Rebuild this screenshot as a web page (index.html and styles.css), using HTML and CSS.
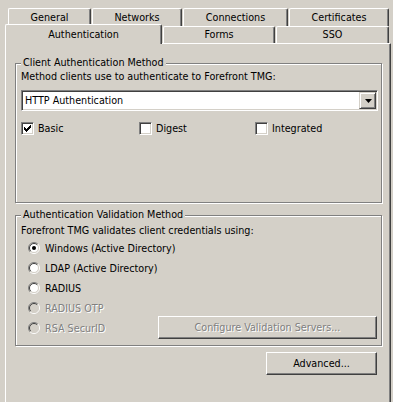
FILE: index.html
```html
<!DOCTYPE html>
<html lang="en">
<head>
    <meta charset="UTF-8">
    <meta name="viewport" content="width=device-width, initial-scale=1.0">
    <title>Authentication</title>
    <link rel="stylesheet" href="styles.css">
</head>
<body>
    <div class="dialog">
        <div class="tab-row back">
            <div class="tab general">General</div>
            <div class="tab networks">Networks</div>
            <div class="tab connections">Connections</div>
            <div class="tab certificates">Certificates</div>
        </div>
        <div class="tab-row front">
            <div class="tab selected auth">Authentication</div>
            <div class="tab forms">Forms</div>
            <div class="tab sso">SSO</div>
        </div>

        <div class="panel">
            <div class="group client">
                <div class="legend">Client Authentication Method</div>
                <div class="desc">Method clients use to authenticate to Forefront TMG:</div>
                <div class="combo">
                    <div class="combo-value">HTTP Authentication</div>
                    <div class="combo-button">
                        <svg width="7" height="4" viewBox="0 0 7 4"><path d="M0 0h7L3.5 4z" fill="#000"/></svg>
                    </div>
                </div>
                <div class="checks">
                    <label class="check basic">
                        <span class="box">
                            <svg width="7" height="7" viewBox="0 0 7 7" shape-rendering="crispEdges"><path d="M6 0h1v1h-1z M5 1h2v1h-2z M0 2h1v1h-1z M4 2h3v1h-3z M0 3h2v1h-2z M3 3h3v1h-3z M0 4h5v1h-5z M1 5h3v1h-3z M2 6h1v1h-1z" fill="#000"/></svg>
                        </span>
                        Basic
                    </label>
                    <label class="check digest"><span class="box"></span>Digest</label>
                    <label class="check"><span class="box"></span>Integrated</label>
                </div>
            </div>

            <div class="group validation">
                <div class="legend">Authentication Validation Method</div>
                <div class="desc">Forefront TMG validates client credentials using:</div>
                <div class="radios">
                    <div class="radio-row">
                        <svg class="radio" width="12" height="12" viewBox="0 0 12 12">
                            <circle cx="6" cy="6" r="4.5" fill="#fff"/>
                            <path d="M2.1 9.9A5.5 5.5 0 0 1 9.9 2.1" fill="none" stroke="#808080"/>
                            <path d="M9.9 2.1A5.5 5.5 0 0 1 2.1 9.9" fill="none" stroke="#fff"/>
                            <path d="M2.8 9.2A4.5 4.5 0 0 1 9.2 2.8" fill="none" stroke="#404040"/>
                            <path d="M9.2 2.8A4.5 4.5 0 0 1 2.8 9.2" fill="none" stroke="#d4d0c8"/>
                            <circle cx="6" cy="6" r="2" fill="#000"/>
                        </svg>
                        <span>Windows (Active Directory)</span>
                    </div>
                    <div class="radio-row">
                        <svg class="radio" width="12" height="12" viewBox="0 0 12 12">
                            <circle cx="6" cy="6" r="4.5" fill="#fff"/>
                            <path d="M2.1 9.9A5.5 5.5 0 0 1 9.9 2.1" fill="none" stroke="#808080"/>
                            <path d="M9.9 2.1A5.5 5.5 0 0 1 2.1 9.9" fill="none" stroke="#fff"/>
                            <path d="M2.8 9.2A4.5 4.5 0 0 1 9.2 2.8" fill="none" stroke="#404040"/>
                            <path d="M9.2 2.8A4.5 4.5 0 0 1 2.8 9.2" fill="none" stroke="#d4d0c8"/>
                        </svg>
                        <span>LDAP (Active Directory)</span>
                    </div>
                    <div class="radio-row">
                        <svg class="radio" width="12" height="12" viewBox="0 0 12 12">
                            <circle cx="6" cy="6" r="4.5" fill="#fff"/>
                            <path d="M2.1 9.9A5.5 5.5 0 0 1 9.9 2.1" fill="none" stroke="#808080"/>
                            <path d="M9.9 2.1A5.5 5.5 0 0 1 2.1 9.9" fill="none" stroke="#fff"/>
                            <path d="M2.8 9.2A4.5 4.5 0 0 1 9.2 2.8" fill="none" stroke="#404040"/>
                            <path d="M9.2 2.8A4.5 4.5 0 0 1 2.8 9.2" fill="none" stroke="#d4d0c8"/>
                        </svg>
                        <span>RADIUS</span>
                    </div>
                    <div class="radio-row disabled">
                        <svg class="radio" width="12" height="12" viewBox="0 0 12 12">
                            <circle cx="6" cy="6" r="4.5" fill="#d4d0c8"/>
                            <path d="M2.1 9.9A5.5 5.5 0 0 1 9.9 2.1" fill="none" stroke="#808080"/>
                            <path d="M9.9 2.1A5.5 5.5 0 0 1 2.1 9.9" fill="none" stroke="#fff"/>
                            <path d="M2.8 9.2A4.5 4.5 0 0 1 9.2 2.8" fill="none" stroke="#404040"/>
                            <path d="M9.2 2.8A4.5 4.5 0 0 1 2.8 9.2" fill="none" stroke="#d4d0c8"/>
                        </svg>
                        <span>RADIUS OTP</span>
                    </div>
                    <div class="radio-row last">
                        <div class="radio-item disabled">
                            <svg class="radio" width="12" height="12" viewBox="0 0 12 12">
                                <circle cx="6" cy="6" r="4.5" fill="#d4d0c8"/>
                                <path d="M2.1 9.9A5.5 5.5 0 0 1 9.9 2.1" fill="none" stroke="#808080"/>
                                <path d="M9.9 2.1A5.5 5.5 0 0 1 2.1 9.9" fill="none" stroke="#fff"/>
                                <path d="M2.8 9.2A4.5 4.5 0 0 1 9.2 2.8" fill="none" stroke="#404040"/>
                                <path d="M9.2 2.8A4.5 4.5 0 0 1 2.8 9.2" fill="none" stroke="#d4d0c8"/>
                            </svg>
                            <span>RSA SecurID</span>
                        </div>
                        <button class="btn configure" disabled>Configure Validation Servers...</button>
                    </div>
                </div>
            </div>

            <div class="actions">
                <button class="btn advanced">Advanced...</button>
            </div>
        </div>
    </div>
</body>
</html>
```

FILE: styles.css
```css
* {
    box-sizing: border-box;
}

body {
    margin: 0;
    height: 402px;
    overflow: hidden;
    background: #d4d0c8;
    color: #000;
    font-family: "DejaVu Sans Condensed", "DejaVu Sans", sans-serif;
    font-size: 10.7px;
    line-height: 13px;
}

.dialog {
    padding: 8px 0 0 5px;
}

/* tabs */

.tab-row {
    display: flex;
    gap: 1px;
}

.tab-row.back {
    height: 18px;
    margin-left: 3px;
}

.tab-row.front {
    height: 17px;
}

.tab {
    height: 18px;
    background: #d4d0c8;
    border-top: 1px solid #fff;
    border-left: 1px solid #fff;
    border-right: 1px solid #404040;
    box-shadow: inset -1px 0 0 #808080;
    border-radius: 2px 2px 0 0;
    text-align: center;
    line-height: 17px;
    white-space: nowrap;
}

.tab-row.front .tab {
    height: 17px;
    line-height: 16px;
}

.tab-row.front .tab.selected {
    position: relative;
    z-index: 1;
    height: 20px;
    margin-top: -2px;
    line-height: 19px;
}

.general { width: 83px; }
.networks { width: 90px; }
.connections { width: 105px; }
.certificates { width: 100px; }
.auth { width: 157px; }
.forms { width: 112px; }
.sso { width: 113px; }

/* panel */

.panel {
    width: 386px;
    height: 359px;
    background: #d4d0c8;
    border-top: 1px solid #fff;
    border-left: 1px solid #fff;
    border-right: 1px solid #404040;
    box-shadow: inset -1px 0 0 #808080;
    padding: 19px 0 0 9px;
}

.group {
    width: 367px;
    border: 1px solid #808080;
    box-shadow: inset 1px 1px 0 #fff, 1px 1px 0 #fff;
    padding: 0 4px 0 5px;
}

.group.client {
    height: 140px;
}

.group.validation {
    height: 131px;
    margin-top: 12px;
}

.legend {
    display: table;
    margin-top: -8px;
    padding: 0 2px;
    background: #d4d0c8;
}

.desc {
    margin-top: 1px;
}

.validation .desc {
    margin-top: 3px;
}

/* combo box */

.combo {
    display: flex;
    width: 357px;
    height: 21px;
    margin-top: 7px;
    padding: 1px;
    background: #fff;
    border-top: 1px solid #808080;
    border-left: 1px solid #808080;
    border-right: 1px solid #fff;
    border-bottom: 1px solid #fff;
    box-shadow: inset 1px 1px 0 #404040, inset -1px -1px 0 #d4d0c8;
}

.combo-value {
    flex: 1;
    padding-left: 2px;
    line-height: 17px;
}

.combo-button {
    display: flex;
    align-items: center;
    justify-content: center;
    width: 17px;
    height: 17px;
    padding: 1px 0 0 1px;
    background: #d4d0c8;
    border-top: 1px solid #d4d0c8;
    border-left: 1px solid #d4d0c8;
    border-right: 1px solid #404040;
    border-bottom: 1px solid #404040;
    box-shadow: inset 1px 1px 0 #fff, inset -1px -1px 0 #808080;
}

.combo-button svg {
    display: block;
}

/* check boxes */

.checks {
    display: flex;
    margin-top: 11px;
}

.check {
    display: flex;
    align-items: center;
    gap: 4px;
    height: 13px;
}

.check.basic { width: 118px; }
.check.digest { width: 116px; }

.box {
    display: flex;
    width: 13px;
    height: 13px;
    padding: 1px;
    background: #fff;
    border-top: 1px solid #808080;
    border-left: 1px solid #808080;
    border-right: 1px solid #fff;
    border-bottom: 1px solid #fff;
    box-shadow: inset 1px 1px 0 #404040, inset -1px -1px 0 #d4d0c8;
}

.box svg {
    display: block;
    margin: 1px 0 0 1px;
}

/* radio buttons */

.radios {
    margin-top: 1px;
}

.radio-row,
.radio-item {
    display: flex;
    align-items: center;
    gap: 5px;
}

.radio-row {
    height: 20px;
    padding-left: 7px;
}

.radio {
    display: block;
    flex-shrink: 0;
}

.radio-row.last {
    justify-content: space-between;
    align-items: flex-start;
}

.radio-row.last .radio-item {
    height: 20px;
}

.disabled span,
.btn:disabled {
    color: #808080;
    text-shadow: 1px 1px 0 #fff;
}

/* buttons */

.btn {
    height: 23px;
    padding: 0;
    background: #d4d0c8;
    border-top: 1px solid #fff;
    border-left: 1px solid #fff;
    border-right: 1px solid #404040;
    border-bottom: 1px solid #404040;
    box-shadow: inset -1px -1px 0 #808080;
    font: inherit;
    color: #000;
}

.btn.configure {
    width: 219px;
    margin-top: -2px;
}

.actions {
    display: flex;
    justify-content: flex-end;
    width: 367px;
    padding-right: 5px;
    margin-top: 6px;
}

.btn.advanced {
    width: 111px;
}
```
